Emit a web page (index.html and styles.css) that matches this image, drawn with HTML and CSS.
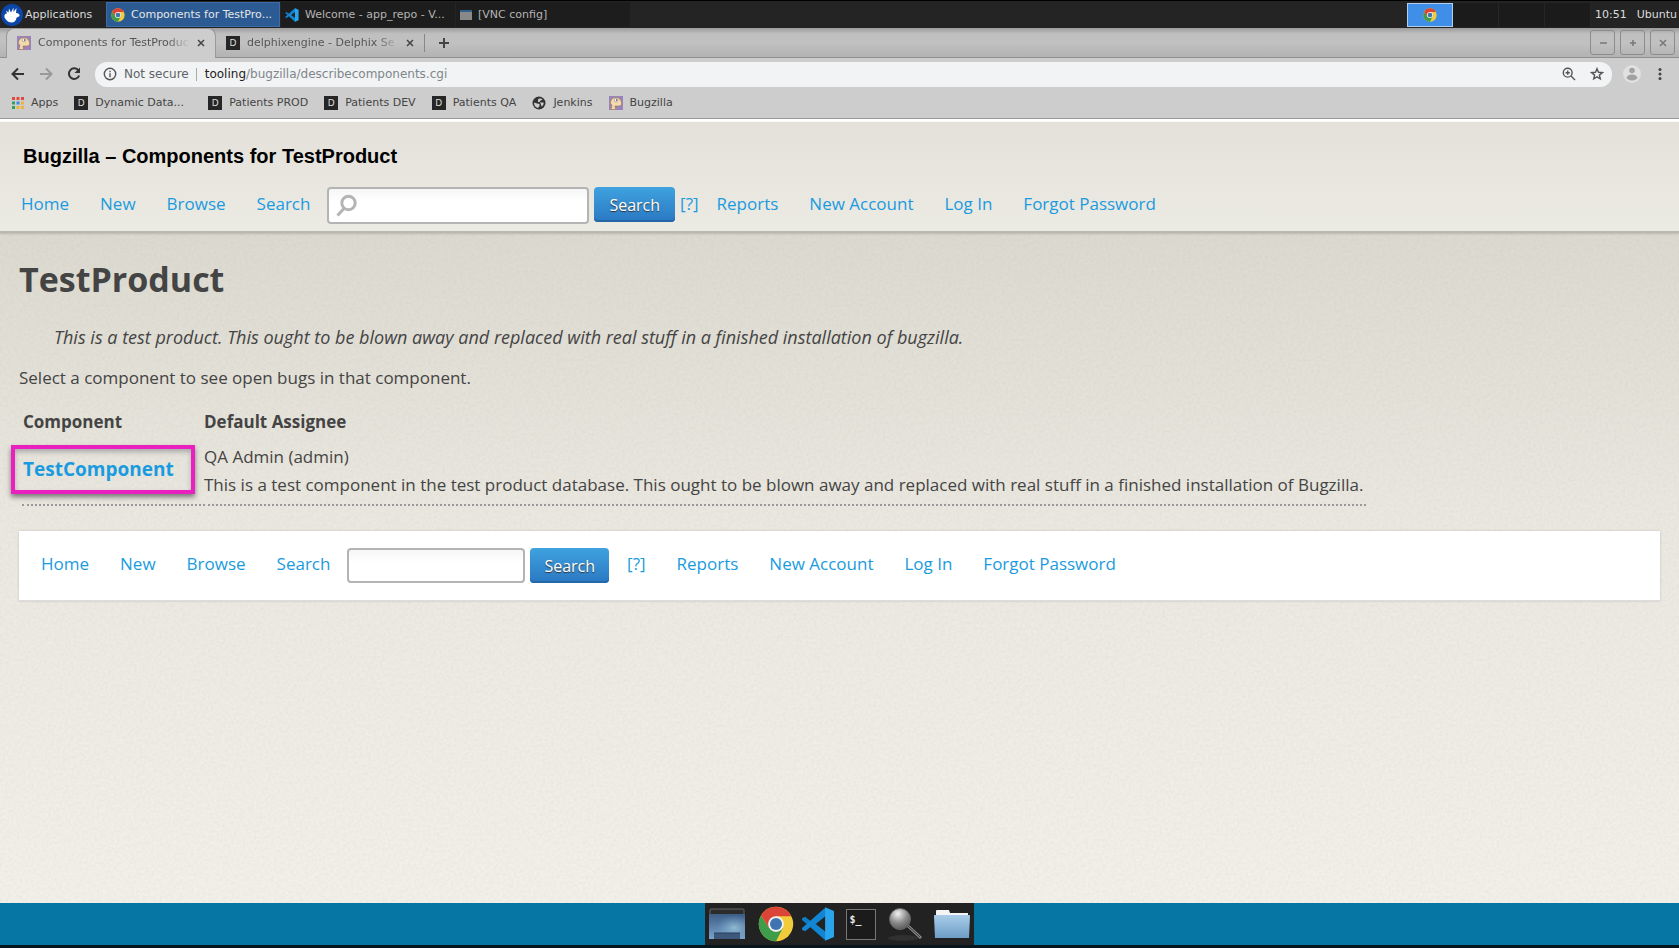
FILE: index.html
```
<!DOCTYPE html>
<html lang="en">
<head>
<meta charset="utf-8">
<title>Components for TestProduct</title>
<link rel="stylesheet" href="styles.css">
</head>
<body>
<svg class="defs" aria-hidden="true">
  <defs>
    <linearGradient id="desk-grad" x1="0" y1="0" x2="0" y2="1"><stop offset="0" stop-color="#3c5d86"/><stop offset="1" stop-color="#7aa3cc"/></linearGradient>
    <radialGradient id="desk-glow" cx=".7" cy=".55" r=".5"><stop offset="0" stop-color="#9cc9d8" stop-opacity=".8"/><stop offset="1" stop-color="#7aa3cc" stop-opacity="0"/></radialGradient>
    <linearGradient id="folder-grad" x1="0" y1="0" x2="0" y2="1"><stop offset="0" stop-color="#a9cdea"/><stop offset="1" stop-color="#6d9dc6"/></linearGradient>
    <radialGradient id="lens-grad" cx=".4" cy=".25" r=".8"><stop offset="0" stop-color="#f2f2f2"/><stop offset=".55" stop-color="#8a8a8a"/><stop offset="1" stop-color="#555"/></radialGradient>
    <symbol id="chrome" viewBox="0 0 48 48">
      <circle cx="24" cy="24" r="23" fill="#f2cb3a"/>
      <path d="M4.100 12.500A23 23 0 0 0 24 47L33.100 29.300 14.900 29.300Z" fill="#3f9c4a"/>
      <path d="M4.100 12.500 14.900 29.300 24 13.500H44.500A23 23 0 0 0 4.100 12.500Z" fill="#dc4437"/>
      <circle cx="24" cy="24" r="10.500" fill="#f1f1f1"/>
      <circle cx="24" cy="24" r="8" fill="#3f74b0"/>
    </symbol>
    <symbol id="code" viewBox="0 0 100 100">
      <path d="M73 2 30 43 12 29 3 33v5l62 55 8 5Z" fill="#0d7cc4"/>
      <path d="M73 98 30 57 12 71 3 67v-5L65 7l8-5Z" fill="#1286d2"/>
      <path d="M71 1 97 12v76L71 99V71L44 50 71 29Z" fill="#2ba4ee"/>
      <path d="M71 28v44L43 50Z" fill="#222"/>
    </symbol>
    <symbol id="buggie" viewBox="0 0 14 14">
      <rect width="14" height="14" fill="#9a83bb"/>
      <path d="M1.500 6C2 3 4 1.500 7 1.500c3 0 5 2 5.500 5 .5 2-.5 3.500-2.500 3.500H6l.5 3.500H2L3 9C1.800 8.500 1.200 7.500 1.500 6Z" fill="#f3d9ad" stroke="#9f7744" stroke-width=".6"/>
      <circle cx="7" cy="4" r="1.800" fill="#fff" stroke="#777" stroke-width=".5"/><circle cx="7.500" cy="4" r=".7" fill="#333"/>
    </symbol>
  </defs>
</svg>

<header class="panel">
  <button class="panel-apps" type="button">
    <svg width="22" height="22" viewBox="0 0 22 22"><circle cx="11" cy="11" r="11" fill="#0b46a8"/><path d="M3.500 13.500C3 11 4 9.500 6 9.500L5 6.500 7.500 8.500 8 4.500 10 8.500 12.500 3.500V8L15.500 4 15 9c2.500 0 4 1.500 3.500 3-.6 1-2.500.8-3 2-.5 2.500-2 4.500-5 4.500-4 0-5.500-3-7-5Z" fill="#fff"/></svg>
    <span>Applications</span>
  </button>
  <button class="task task-active" type="button"><svg width="14" height="14"><use href="#chrome"/></svg><span>Components for TestPro...</span></button>
  <button class="task" type="button"><svg width="14" height="14"><use href="#code"/></svg><span>Welcome - app_repo - V...</span></button>
  <button class="task" type="button"><svg width="12" height="10" viewBox="0 0 12 10"><rect width="12" height="10" fill="#898989"/><rect width="12" height="2" fill="#345f91"/></svg><span>[VNC config]</span></button>
  <div class="pager">
    <span class="cell cell-active"><svg width="14" height="14"><use href="#chrome"/></svg></span><span class="cell"></span><span class="cell"></span><span class="cell"></span>
  </div>
  <time class="clock">10:51</time>
  <span class="user">Ubuntu</span>
</header>

<div class="tabstrip">
  <div class="tab tab-active">
    <svg width="14" height="14"><use href="#buggie"/></svg>
    <span class="tab-title">Components for TestProduc</span>
    <button class="close" type="button" aria-label="Close tab"><svg width="8" height="8" viewBox="0 0 8 8"><path d="M1 1l6 6M7 1 1 7"/></svg></button>
  </div>
  <div class="tab">
    <span class="dlogo">D</span>
    <span class="tab-title">delphixengine - Delphix Se</span>
    <button class="close" type="button" aria-label="Close tab"><svg width="8" height="8" viewBox="0 0 8 8"><path d="M1 1l6 6M7 1 1 7"/></svg></button>
  </div>
  <button class="newtab" type="button" aria-label="New tab"><svg width="10" height="10" viewBox="0 0 10 10"><path d="M5 0v10M0 5h10"/></svg></button>
  <div class="winbtns">
    <button type="button" aria-label="Minimize"><svg width="8" height="8" viewBox="0 0 8 8"><path d="M1 4h7"/></svg></button>
    <button type="button" aria-label="Maximize"><svg width="8" height="8" viewBox="0 0 8 8"><path d="M4 1v6M1 4h6"/></svg></button>
    <button type="button" aria-label="Close"><svg width="8" height="8" viewBox="0 0 8 8"><path d="M1 1l6 6M7 1 1 7"/></svg></button>
  </div>
</div>

<div class="toolbar">
  <button class="tool" type="button" aria-label="Back"><svg width="14" height="14" viewBox="0 0 14 14"><path d="M13 7H2M7 1.500 1.500 7 7 12.500"/></svg></button>
  <button class="tool tool-off" type="button" aria-label="Forward"><svg width="14" height="14" viewBox="0 0 14 14"><path d="M1 7h11M7 1.500 12.500 7 7 12.500"/></svg></button>
  <button class="tool" type="button" aria-label="Reload"><svg width="14" height="14" viewBox="0 0 14 14"><path d="M11.500 3.500A5.300 5.300 0 1 0 12.200 8.500"/><path d="M13 .5V6H7.500Z" fill="#333" stroke="none"/></svg></button>
  <div class="omnibox">
    <svg width="14" height="14" viewBox="0 0 14 14"><circle cx="7" cy="7" r="5.700"/><path d="M7 6.200v4M7 3.700v1.500"/></svg>
    <span class="secure">Not secure</span>
    <span class="url"><b>tooling</b>/bugzilla/describecomponents.cgi</span>
    <svg width="14" height="14" viewBox="0 0 14 14"><circle cx="5.700" cy="5.700" r="4.400"/><path d="M9 9l4 4M5.700 3.600v4.200M3.600 5.700h4.200"/></svg>
    <svg class="star" width="14" height="14" viewBox="0 0 14 14"><path d="M7 1.700 8.500 5.300l3.900.3-3 2.500.9 3.800L7 9.900l-3.300 2 .9-3.800-3-2.500 3.900-.3Z"/></svg>
  </div>
  <button class="avatar" type="button" aria-label="Profile"><svg width="18" height="18" viewBox="0 0 18 18"><circle cx="9" cy="9" r="9" fill="#e1e1e1"/><circle cx="9" cy="5.500" r="2.800" fill="#a2a2a2"/><ellipse cx="9" cy="12.500" rx="5.300" ry="3" fill="#a2a2a2"/></svg></button>
  <button class="more" type="button" aria-label="Menu"><svg width="4" height="12" viewBox="0 0 4 12"><circle cx="2" cy="1.500" r="1.500"/><circle cx="2" cy="6" r="1.500"/><circle cx="2" cy="10.500" r="1.500"/></svg></button>
</div>

<nav class="bookmarks" aria-label="Bookmarks">
  <a href="#"><svg width="12" height="12" viewBox="0 0 12 12"><path d="M0 0h3v3H0zM4.500 0h3v3h-3zM9 0h3v3H9z" fill="#dd4b3e"/><path d="M0 4.500h3v3H0z" fill="#32a05a"/><path d="M4.500 4.500h3v3h-3z" fill="#3f86e8"/><path d="M9 4.500h3v3H9zM4.500 9h3v3h-3zM9 9h3v3H9z" fill="#efb532"/><path d="M0 9h3v3H0z" fill="#32a05a"/></svg>Apps</a>
  <a class="wide" href="#"><span class="dlogo">D</span>Dynamic Data...</a>
  <a href="#"><span class="dlogo">D</span>Patients PROD</a>
  <a href="#"><span class="dlogo">D</span>Patients DEV</a>
  <a href="#"><span class="dlogo">D</span>Patients QA</a>
  <a href="#"><svg width="14" height="14" viewBox="0 0 14 14"><circle cx="7" cy="7" r="6.500" fill="#333"/><path d="M6 3.500C7 2 9.500 2.500 10.500 3.500L8.500 4.500 7.500 6H6ZM2 6.500l3 1L7.500 8v2L6 12C3.500 11.500 2 9.500 2 6.500ZM8 6.500h3.500c.5 1.500-.5 3-2 4L9 8.500Z" fill="#cdcdcd"/></svg>Jenkins</a>
  <a href="#"><svg width="14" height="14"><use href="#buggie"/></svg>Bugzilla</a>
</nav>

<div class="page">
  <svg class="grain" aria-hidden="true" width="100%" height="100%"><filter id="noise"><feTurbulence type="fractalNoise" baseFrequency=".35" numOctaves="2"/><feColorMatrix values="0 0 0 0 .4  0 0 0 0 .38  0 0 0 0 .3  1.500 0 0 0 -.5"/></filter><rect width="100%" height="100%" filter="url(#noise)"/></svg>
  <header class="site-head">
    <div class="site-title">Bugzilla – Components for TestProduct</div>
    <nav class="links" aria-label="Main">
      <a href="#">Home</a><a href="#">New</a><a href="#">Browse</a><a href="#">Search</a>
      <form class="find find-head">
        <span class="field">
          <svg width="22" height="24" viewBox="0 0 22 24"><circle cx="13.500" cy="9" r="6.700"/><path d="M9 14.500 2.500 21.500"/></svg>
          <input type="text" aria-label="Quick search">
        </span>
        <button class="go" type="button">Search</button>
        <a href="#">[?]</a>
      </form>
      <a href="#">Reports</a><a href="#">New Account</a><a href="#">Log In</a><a href="#">Forgot Password</a>
    </nav>
  </header>

  <main>
    <h1>TestProduct</h1>
    <p class="about">This is a test product. This ought to be blown away and replaced with real stuff in a finished installation of bugzilla.</p>
    <p class="hint">Select a component to see open bugs in that component.</p>
    <table>
      <thead><tr><th scope="col">Component</th><th scope="col">Default Assignee</th></tr></thead>
      <tbody>
        <tr><td class="comp" rowspan="2"><a href="#">TestComponent</a></td><td class="who">QA Admin (admin)</td></tr>
        <tr><td class="desc">This is a test component in the test product database. This ought to be blown away and replaced with real stuff in a finished installation of Bugzilla.</td></tr>
      </tbody>
    </table>
    <footer class="site-foot">
      <nav class="links" aria-label="Footer">
        <a href="#">Home</a><a href="#">New</a><a href="#">Browse</a><a href="#">Search</a>
        <form class="find find-foot">
          <span class="field"><input type="text" aria-label="Quick search"></span>
          <button class="go" type="button">Search</button>
        </form>
        <a href="#">[?]</a><a href="#">Reports</a><a href="#">New Account</a><a href="#">Log In</a><a href="#">Forgot Password</a>
      </nav>
    </footer>
  </main>
</div>

<div class="dockbar">
  <div class="dock">
    <button type="button" aria-label="Show desktop"><svg width="36" height="32" viewBox="0 0 36 32"><path d="M1 7V2q0-1 1-1h32q1 0 1 1v5" fill="#2c2c2c" stroke="#666"/><rect y="6" width="36" height="25" fill="url(#desk-grad)"/><rect y="6" width="36" height="25" fill="url(#desk-glow)"/><path d="M5 31v-6h26v6Z" fill="#3d587b"/><path d="M5 25h26" stroke="#263d59"/></svg></button>
    <button class="dock-chrome" type="button" aria-label="Chrome"><svg width="36" height="36"><use href="#chrome"/></svg></button>
    <button type="button" aria-label="Code"><svg width="34" height="34"><use href="#code"/></svg></button>
    <button type="button" aria-label="Terminal"><span class="term">$_</span></button>
    <button type="button" aria-label="Finder"><svg width="36" height="34" viewBox="0 0 36 34"><ellipse cx="16" cy="31" rx="15" ry="3" fill="#303030"/><path d="M20 18 34 31" stroke="#8a8a8a" stroke-width="3"/><path d="M20 18 33 30" stroke="#333"/><circle cx="13" cy="12" r="10.500" fill="url(#lens-grad)" stroke="#666"/></svg></button>
    <button type="button" aria-label="Files"><svg width="36" height="30" viewBox="0 0 36 30"><path d="M2 12V2q0-1 1-1h12l1 3h18v8Z" fill="#f4f4f4"/><path d="M0 7q0-1 1-1h34q1 0 1 1l-1 22H1Z" fill="url(#folder-grad)"/></svg></button>
  </div>
</div>
</body>
</html>
```
FILE: styles.css
```
* { box-sizing: border-box; }
html { height: 100%; }
body {
  margin: 0;
  min-height: 100%;
  display: flex;
  flex-direction: column;
  background: #000;
  color: #444;
  font: 11px/16px "DejaVu Sans", sans-serif;
}
button { border: 0; padding: 0; background: none; color: inherit; font: inherit; }
a { text-decoration: none; }
svg { display: block; flex: none; }
.defs { position: absolute; width: 0; height: 0; }

/* desktop panel */
.panel {
  height: 28px;
  padding: 0 2px 0 1px;
  display: flex;
  align-items: center;
  background: #242424;
  border-top: 1px solid #000;
  color: #ddd;
  white-space: nowrap;
}
.panel-apps { display: flex; align-items: center; gap: 2px; width: 105px; }
.task {
  width: 174px;
  height: 25px;
  padding: 0 4px;
  display: flex;
  align-items: center;
  gap: 6px;
  background: #1d1d1d;
  color: #b4b4b4;
}
.task + .task { margin-left: 1px; }
.task-active { background: #2c5a92; border: 1px solid #3c6da8; color: #e6e6e6; }
.pager { display: flex; margin-left: auto; height: 24px; }
.cell { width: 46px; border-right: 1px solid #262626; background: #1b1b1b; }
.cell-active { display: flex; align-items: center; justify-content: center; background: #3f8fe8; border: 1px solid #b4cfee; }
.clock { margin-left: 4px; }
.user { margin-left: 10px; }

/* browser window */
.tabstrip {
  height: 30px;
  display: flex;
  align-items: flex-end;
  padding-left: 6px;
  background: linear-gradient(#9c9c9c, #bfbfbf 20%, #c1c1c1 50%, #b3b3b3);
  border-bottom: 1px solid #8f8f8f;
}
.tab {
  width: 210px;
  height: 29px;
  display: flex;
  align-items: center;
  gap: 7px;
  padding: 0 10px;
  color: #555;
}
.tab + .tab { width: 208px; }
.tab-active {
  background: #cdcdcd;
  border: 1px solid #999;
  border-bottom: 0;
  border-radius: 8px 8px 0 0;
  margin-bottom: -1px;
  padding-bottom: 2px;
  height: 30px;
}
.tab-title {
  flex: 1;
  white-space: nowrap;
  -webkit-mask-image: linear-gradient(90deg, #000 85%, transparent);
  mask-image: linear-gradient(90deg, #000 85%, transparent);
}
.close svg, .newtab svg, .winbtns svg, .tool svg, .omnibox svg { fill: none; stroke: #444; stroke-width: 2; }
.close svg { stroke-width: 1.500; }
.newtab { height: 18px; margin-bottom: 5px; padding-left: 14px; border-left: 1px solid #888; }
.winbtns { display: flex; gap: 5px; margin: 0 4px 2px auto; }
.winbtns button { width: 25px; height: 25px; display: grid; place-items: center; border: 1px solid #8c8c8c; border-radius: 3px; }
.winbtns svg { stroke: #777; stroke-width: 1.500; }
.dlogo {
  flex: none;
  width: 14px;
  height: 14px;
  background: #262626;
  color: #ddd;
  font-size: 9px;
  line-height: 14px;
  text-align: center;
}
.toolbar {
  height: 32px;
  display: flex;
  align-items: center;
  gap: 14px;
  padding: 0 17px 0 11px;
  background: #cdcdcd;
}
.tool svg { stroke: #333; }
.tool-off svg { stroke: #999; }
.omnibox {
  flex: 1;
  height: 25px;
  display: flex;
  align-items: center;
  padding: 0 8px;
  border-radius: 12px;
  background: #f1f3f4;
  font-size: 12px;
}
.omnibox svg { stroke: #555; stroke-width: 1.400; }
.omnibox .star { margin-left: 14px; }
.secure { margin-left: 7px; padding-right: 7px; border-right: 1px solid #aaa; line-height: 13px; color: #5f6368; }
.url { flex: 1; padding-left: 8px; color: #80868b; }
.url b { font-weight: normal; color: #222; }
.avatar { margin-left: -3px; }
.more { margin-left: 3px; }
.more svg { fill: #444; }
.bookmarks {
  height: 29px;
  display: flex;
  align-items: center;
  gap: 16px;
  padding: 0 12px 3px;
  background: #cdcdcd;
  border-bottom: 1px solid #999;
}
.bookmarks a { display: flex; align-items: center; gap: 7px; color: #444; }
.bookmarks .wide { width: 118px; }

/* web page */
.page {
  position: relative;
  flex: 1;
  display: flex;
  flex-direction: column;
  border-top: 3px solid #fff;
  background: linear-gradient(#d6d3c9, #dcd9d0 110px, #eae8e0 400px, #f2f0e9);
  color: #444;
  font: 17px/28px "Open Sans", sans-serif;
}
.grain { position: absolute; inset: 0; opacity: .12; pointer-events: none; }
.page a { color: #1a9be0; }
.site-head {
  position: relative;
  padding: 20px 21px 7px;
  background: linear-gradient(#e4e1da, #ebeae3);
  border-bottom: 2px solid #b9b7b0;
  box-shadow: 0 1px 2px #bbb8ae;
}
.site-title { padding-left: 2px; color: #000; font: bold 20px/28px "Liberation Sans", sans-serif; }
.links { display: flex; align-items: center; gap: 31px; white-space: nowrap; }
.site-head .links { margin-top: 17px; }
.links > a, .find > a { padding-bottom: 3px; }
.find { display: flex; align-items: flex-start; gap: 5px; margin: 0 -13px 0 -14px; }
.find > a { align-self: center; }
.field {
  width: 262px;
  height: 37px;
  display: flex;
  align-items: center;
  padding-left: 6px;
  border: 2px solid #b4b4b4;
  border-radius: 4px;
  background: linear-gradient(#f6f6f6, #fff 40%);
}
.field svg { fill: none; stroke: #b4b4b4; stroke-width: 3; }
.field input { flex: 1; min-width: 0; height: 100%; border: 0; background: none; font: inherit; }
.find-foot .field { width: 178px; height: 35px; }
.go {
  height: 35px;
  padding: 0 14px;
  border-radius: 4px;
  background: linear-gradient(#3fa2df, #2a78c2);
  box-shadow: inset 0 -2px 0 #2468a8;
  color: #fff;
  font-size: 16px;
  font-weight: 500;
  text-shadow: 0 1px 1px #333;
}
.find-head .go { padding: 0 15px; }

main { position: relative; padding: 23px 19px 20px; }
h1 { margin: 0; font-size: 34px; line-height: 46px; }
.about { margin: 21px 0 0 35px; font-size: 18px; font-style: italic; }
.hint { margin: 13px 0 14px; }
table { margin-left: 1px; border-spacing: 2px 0; }
th, td { padding: 0 3px 0 1px; text-align: left; }
th { padding-bottom: 5px; line-height: 32px; }
.comp { width: 179px; padding: 0; border-bottom: 2px dotted #999; vertical-align: top; }
.comp a {
  display: block;
  width: 184px;
  margin: 2px 0 0 -11px;
  padding: 0 8px;
  border: 4px solid #ea1fc0;
  box-shadow: 0 3px 5px #777, inset 0 3px 5px #aaa;
  font-size: 19px;
  font-weight: bold;
  line-height: 41px;
}
.desc { border-bottom: 2px dotted #999; padding-bottom: 5px; }
.site-foot {
  margin-top: 25px;
  padding: 17px 22px;
  background: #fff;
  border-bottom: 1px solid #ddd;
  box-shadow: 0 0 2px #bbb;
}

/* dock */
.dockbar {
  display: flex;
  justify-content: center;
  height: 45px;
  padding-right: 1px;
  background: #0676a4;
  border-bottom: 3px solid #07151c;
}
.dock { padding: 0 4px; display: flex; gap: 11px; align-items: center; background: #222; }
.dock-chrome { margin: 0 -4px 0 2px; }
.term {
  display: block;
  width: 30px;
  height: 31px;
  padding-left: 3px;
  border: 1px solid #777;
  background: #1b1b1b;
  color: #e5e5e5;
  font: bold 10px/20px "DejaVu Sans Mono", monospace;
  text-align: left;
}
```
